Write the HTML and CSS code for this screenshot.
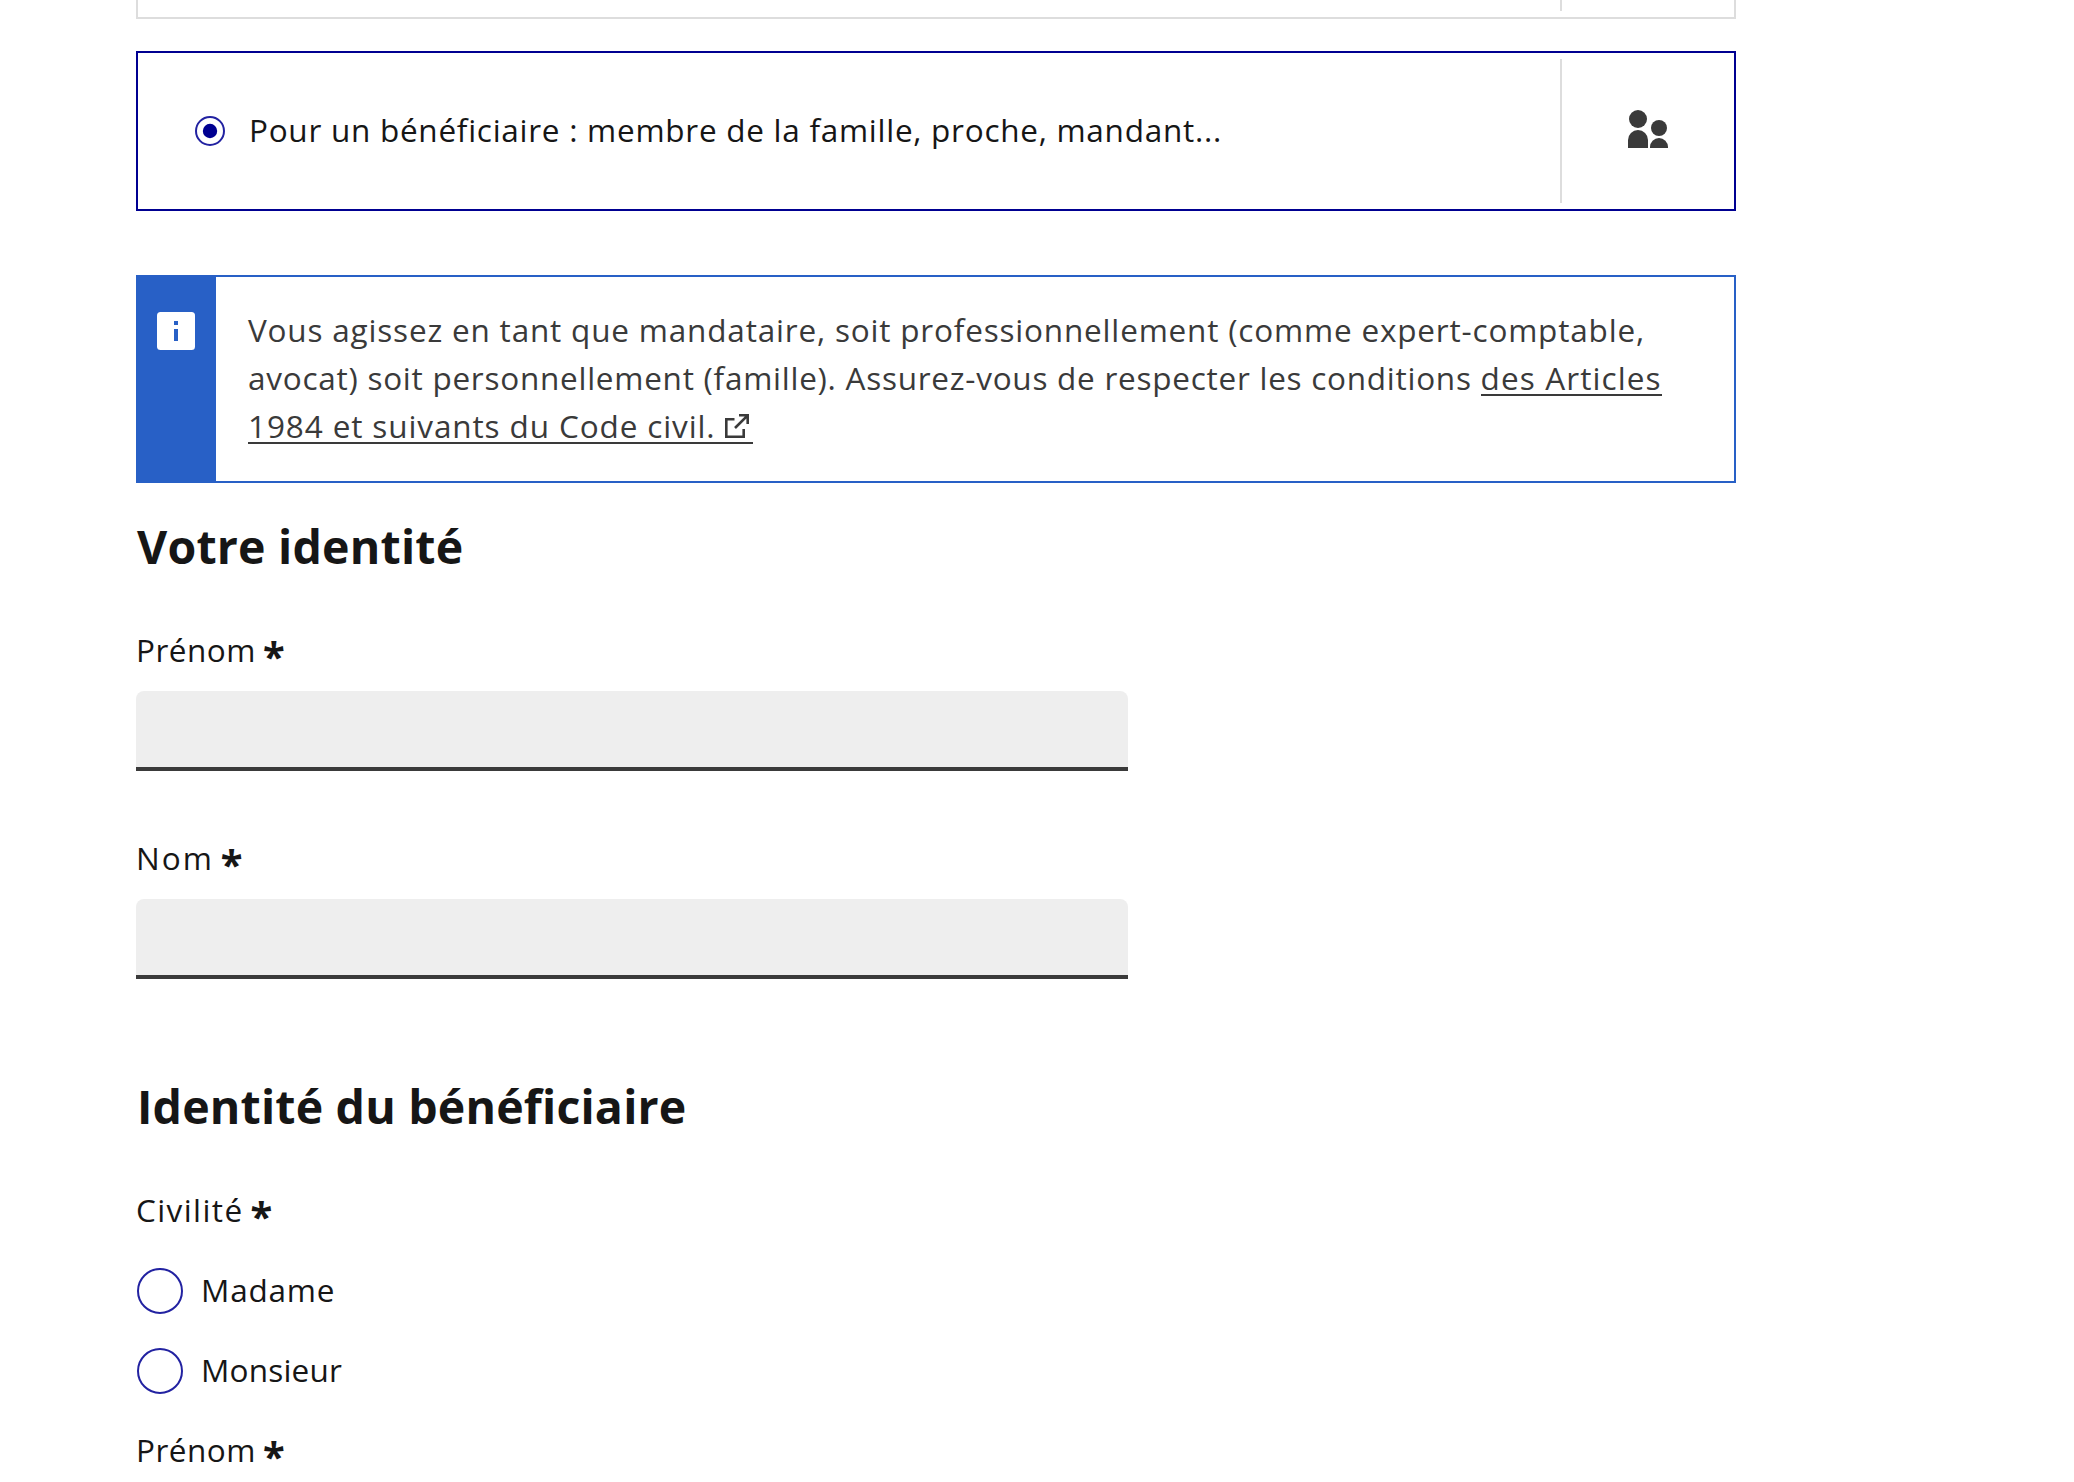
FILE: index.html
```html
<!DOCTYPE html>
<html lang="fr">
<head>
<meta charset="utf-8">
<title>Identité du bénéficiaire</title>
<link rel="stylesheet" href="styles.css">
</head>
<body>
<main class="form">
  <div class="card card-cut"><div class="card-main"></div><div class="card-side"></div></div>
  <label class="card card-selected">
    <span class="card-main">
      <svg class="radio-small" viewBox="0 0 32 32"><circle cx="16" cy="16" r="14" fill="none" stroke="#2222a1" stroke-width="2"/><circle cx="16" cy="16" r="7.2" fill="#000091"/></svg>
      <span class="t-choice">Pour un bénéficiaire : membre de la famille, proche, mandant...</span>
    </span>
    <span class="card-side">
      <svg class="people" viewBox="0 0 40 38" fill="#3a3a3a"><circle cx="10" cy="9" r="9"/><path d="M0 38V30a10 10 0 0 1 20 0v8z"/><circle cx="31" cy="18" r="8"/><path d="M22 38v-1a9 9 0 0 1 18 0v1z"/></svg>
    </span>
  </label>

  <div class="alert">
    <div class="alert-icon">
      <svg width="38" height="38" viewBox="0 0 38 38"><rect width="38" height="38" rx="3.5" fill="#fff"/><path d="M17 9h4v4h-4zM17 17h4v12h-4z" fill="#2860c6"/></svg>
    </div>
    <p class="alert-text"><span class="t-l1">Vous agissez en tant que mandataire, soit professionnellement (comme expert-comptable,</span><br><span class="t-l2">avocat) soit personnellement (famille). Assurez-vous de respecter les conditions </span><a class="link t-l2b">des Articles</a><br><a class="link t-l3">1984 et suivants du Code civil.<svg class="ext" viewBox="0 0 24 24" fill="none" stroke="#3a3a3a" stroke-width="2.6"><path d="M9.5 5.3H1.3v17.4h17.4V15M14 1.3h8.7V10M22.2 1.8L10 14"/></svg></a></p>
  </div>

  <h2 class="title t-h1">Votre identité</h2>
  <div class="field">
    <label class="label"><span class="t-prenom">Prénom</span><b class="req">*</b></label>
    <input class="input" type="text">
  </div>
  <div class="field">
    <label class="label"><span class="t-nom">Nom</span><b class="req">*</b></label>
    <input class="input" type="text">
  </div>

  <h2 class="title title-second t-h2">Identité du bénéficiaire</h2>
  <div class="group">
    <div class="label"><span class="t-civ">Civilité</span><b class="req">*</b></div>
    <label class="option"><i class="radio"></i><span class="t-mme">Madame</span></label>
    <label class="option"><i class="radio"></i><span class="t-m">Monsieur</span></label>
    <div class="label"><span class="t-prenom">Prénom</span><b class="req">*</b></div>
  </div>
</main>
</body>
</html>
```
FILE: styles.css
```css
* { box-sizing: border-box; }
html, body { height: 100%; }
body {
  margin: 0;
  overflow: hidden;
  background: #fff;
  color: #161616;
  font: 400 31.5px/48px "Open Sans", "Noto Sans", sans-serif;
  letter-spacing: .73px;
  font-variant-ligatures: none;
}
.form { width: 1600px; margin-left: 136px; }

.card { display: flex; height: 160px; border: 2px solid #ddd; }
.card-cut { height: 19px; border-top: 0; margin-bottom: 32px; }
.card-selected { border-color: #000091; }
.card-main { flex: 1; display: flex; align-items: center; padding-left: 56px; white-space: nowrap; }
.card-selected .card-main { padding-bottom: 2px; }
.card-side { width: 174px; margin: 6px 0; border-left: 2px solid #ddd; display: flex; align-items: center; justify-content: center; }
.card-cut .card-side { margin-top: 0; }
.radio-small { width: 32px; height: 32px; margin: 2px 23px 0 0; }
.people { width: 40px; height: 38px; margin-bottom: 4px; }

.alert { display: flex; height: 208px; margin-top: 64px; border: 2px solid #2860c6; color: #3a3a3a; }
.alert-icon { width: 78px; padding: 35px 0 0 19px; background: #2860c6; line-height: 0; }
.alert-text { margin: 0; padding: 29px 0 0 32px; white-space: nowrap; }
.link { background: linear-gradient(#3a3a3a, #3a3a3a) 0 38px / 100% 2px no-repeat; }
.ext { width: 24px; height: 24px; margin: 0 4px 0 9px; vertical-align: 0; }

.title { margin: 35px 0 52px 1px; font-size: 46.5px; font-weight: 700; line-height: 56px; }
.title-second { margin-top: 99px; }
.field + .field { margin-top: 63px; }
.label { display: block; height: 48px; white-space: nowrap; }
.input {
  display: block;
  width: 992px;
  height: 80px;
  margin-top: 17px;
  padding: 0 16px;
  border: 0;
  border-radius: 8px 8px 0 0;
  background: #eee;
  box-shadow: inset 0 -4px 0 #3a3a3a;
}
.req {
  margin-left: 7px;
  font: 700 40px/0 "Noto Sans", sans-serif;
  letter-spacing: 0;
  vertical-align: -9px;
}
.group { display: grid; gap: 32px; }
.option { display: flex; align-items: center; height: 48px; }
.radio { width: 46px; height: 46px; margin: 2px 18px 0 1px; border: 2px solid #2222a1; border-radius: 50%; }

/* tracking per text */
.t-l1 { letter-spacing: .81px; }
.t-l2 { letter-spacing: .74px; }
.t-l2b { letter-spacing: 1.1px; }
.t-l3 { letter-spacing: .88px; }
.t-h1 { letter-spacing: .2px; }
.t-h2 { letter-spacing: .18px; }
.t-prenom { letter-spacing: .5px; }
.t-nom { letter-spacing: 2px; }
.t-civ { letter-spacing: 1.4px; }
.t-mme { letter-spacing: .8px; }
.t-m { letter-spacing: .2px; }
```
